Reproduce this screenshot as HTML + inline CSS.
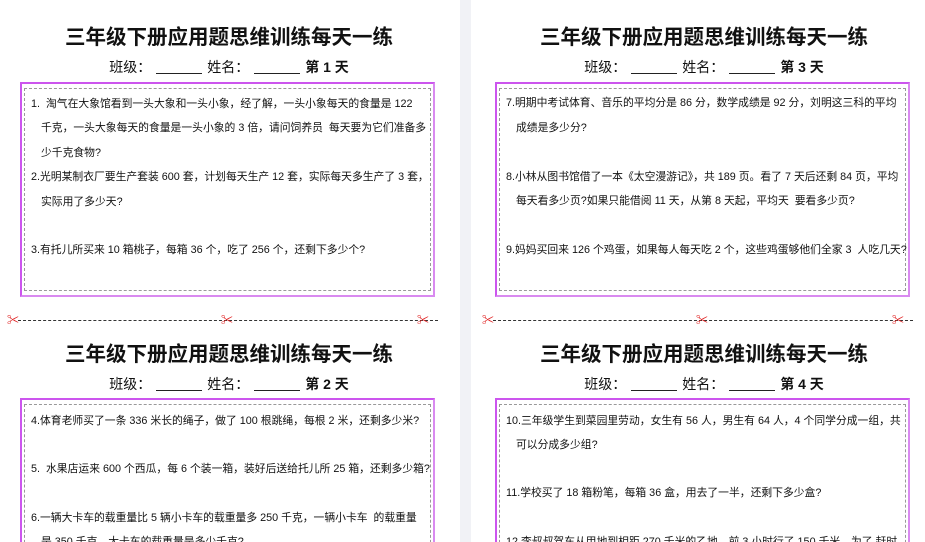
<!DOCTYPE html>
<html style="overflow:hidden;height:542px"><head><meta charset="utf-8"><style>
body{margin:0;width:925px;height:542px;overflow:hidden;background:#fff;font-family:"Liberation Sans","Noto Sans CJK SC",sans-serif;color:#111;position:relative}
.gap{position:absolute;left:460px;top:0;width:11px;height:542px;background:#f1f2f6}
.t{position:absolute;width:458px;text-align:center;font-size:20.5px;font-weight:bold;line-height:30px}
.s{position:absolute;width:458px;text-align:center;font-size:14px;line-height:20px}
.s u{display:inline-block;width:46px;border-bottom:1.3px solid #222;height:15px;vertical-align:-2px;margin:0 5px}
.box{position:absolute;width:415px;border:2px solid #d98af0;box-sizing:border-box;border-left-color:#cc55ee;border-top-color:#cc55ee}
.in{position:absolute;left:2px;top:4px;right:2px;bottom:4px;border:1px dashed #999}
.l{position:absolute;font-size:10.8px;line-height:14px;white-space:nowrap}
.cut{position:absolute;top:320px;height:0;border-top:1px dashed #333}
.sc{position:absolute;top:313px;color:#e02020;font-size:12px;line-height:14px}
</style></head><body>
<div class="gap"></div>

<div class="t" style="left:0;top:23px">三年级下册应用题思维训练每天一练</div>
<div class="s" style="left:0;top:57px">班级：<u></u>姓名：<u></u><b>第 1 天</b></div>
<div class="box" style="left:20px;top:82px;height:215px"><div class="in"></div></div>
<div class="l" style="left:31px;top:97px">1.&nbsp; 淘气在大象馆看到一头大象和一头小象，经了解，一头小象每天的食量是 122</div>
<div class="l" style="left:41px;top:121px">千克，一头大象每天的食量是一头小象的 3 倍，请问饲养员&nbsp; 每天要为它们准备多</div>
<div class="l" style="left:41px;top:146px">少千克食物?</div>
<div class="l" style="left:31px;top:170px">2.光明某制衣厂要生产套装 600 套，计划每天生产 12 套，实际每天多生产了 3 套，</div>
<div class="l" style="left:41px;top:195px">实际用了多少天?</div>
<div class="l" style="left:31px;top:243px">3.有托儿所买来 10 箱桃子，每箱 36 个，吃了 256 个，还剩下多少个?</div>

<div class="cut" style="left:18px;width:420px"></div>
<div class="sc" style="left:7px">✂</div><div class="sc" style="left:221px">✂</div><div class="sc" style="left:417px">✂</div>

<div class="t" style="left:0;top:340px">三年级下册应用题思维训练每天一练</div>
<div class="s" style="left:0;top:374px">班级：<u></u>姓名：<u></u><b>第 2 天</b></div>
<div class="box" style="left:20px;top:398px;height:160px;border-bottom:none"><div class="in" style="bottom:0;border-bottom:none"></div></div>
<div class="l" style="left:31px;top:414px">4.体育老师买了一条 336 米长的绳子，做了 100 根跳绳，每根 2 米，还剩多少米?</div>
<div class="l" style="left:31px;top:462px">5.&nbsp; 水果店运来 600 个西瓜，每 6 个装一箱，装好后送给托儿所 25 箱，还剩多少箱?</div>
<div class="l" style="left:31px;top:511px">6.一辆大卡车的载重量比 5 辆小卡车的载重量多 250 千克，一辆小卡车&nbsp; 的载重量</div>
<div class="l" style="left:41px;top:535px">是 350 千克，大卡车的载重量是多少千克?</div>

<div class="t" style="left:475px;top:23px">三年级下册应用题思维训练每天一练</div>
<div class="s" style="left:475px;top:57px">班级：<u></u>姓名：<u></u><b>第 3 天</b></div>
<div class="box" style="left:495px;top:82px;height:215px"><div class="in"></div></div>
<div class="l" style="left:506px;top:96px">7.明期中考试体育、音乐的平均分是 86 分，数学成绩是 92 分，刘明这三科的平均</div>
<div class="l" style="left:516px;top:121px">成绩是多少分?</div>
<div class="l" style="left:506px;top:170px">8.小林从图书馆借了一本《太空漫游记》，共 189 页。看了 7 天后还剩 84 页，平均</div>
<div class="l" style="left:516px;top:194px">每天看多少页?如果只能借阅 11 天，从第 8 天起，平均天&nbsp; 要看多少页?</div>
<div class="l" style="left:506px;top:243px">9.妈妈买回来 126 个鸡蛋，如果每人每天吃 2 个，这些鸡蛋够他们全家 3&nbsp; 人吃几天?</div>

<div class="cut" style="left:493px;width:420px"></div>
<div class="sc" style="left:482px">✂</div><div class="sc" style="left:696px">✂</div><div class="sc" style="left:892px">✂</div>

<div class="t" style="left:475px;top:340px">三年级下册应用题思维训练每天一练</div>
<div class="s" style="left:475px;top:374px">班级：<u></u>姓名：<u></u><b>第 4 天</b></div>
<div class="box" style="left:495px;top:398px;height:160px;border-bottom:none"><div class="in" style="bottom:0;border-bottom:none"></div></div>
<div class="l" style="left:506px;top:414px">10.三年级学生到菜园里劳动，女生有 56 人，男生有 64 人，4 个同学分成一组，共</div>
<div class="l" style="left:516px;top:438px">可以分成多少组?</div>
<div class="l" style="left:506px;top:486px">11.学校买了 18 箱粉笔，每箱 36 盒，用去了一半，还剩下多少盒?</div>
<div class="l" style="left:506px;top:535px">12.李叔叔驾车从甲地到相距 270 千米的乙地，前 3 小时行了 150 千米，为了 赶时</div>
</body></html>
